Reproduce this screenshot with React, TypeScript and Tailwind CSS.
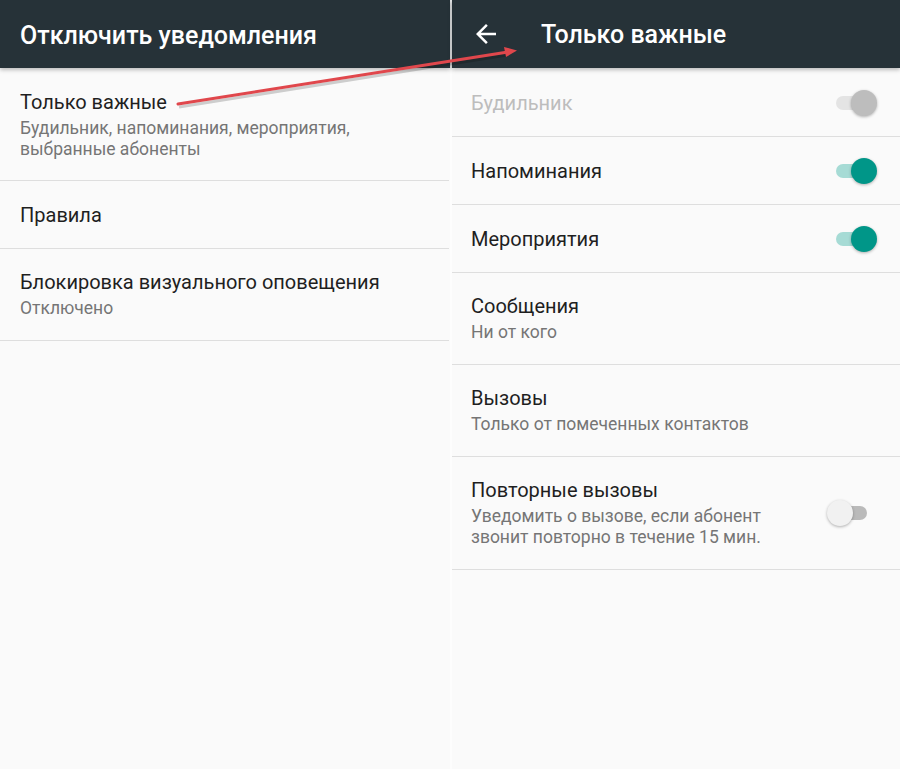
import React from "react";

function BackArrow() {
  return (
    <svg width="30" height="30" viewBox="0 0 24 24" fill="#ffffff">
      <path d="M20 11H7.83l5.59-5.59L12 4l-8 8 8 8 1.41-1.41L7.83 13H20v-2z" />
    </svg>
  );
}

type ToggleProps = { state: "on" | "off" | "disabled" };

function Toggle({ state }: ToggleProps) {
  const track =
    state === "on" ? "bg-[#a6dbd5]" : state === "disabled" ? "bg-[#e4e4e4]" : "bg-[#bababa]";
  const thumb =
    state === "on"
      ? "bg-[#009688] right-0"
      : state === "disabled"
      ? "bg-[#bdbdbd] right-0"
      : "bg-[#f1f1f1] left-0";
  return (
    <div className={`relative w-[46px] h-[26px] shrink-0 ${state === "off" ? "mr-[4px]" : ""}`}>
      <div className={`absolute left-[5px] right-[6px] top-[6px] h-[14px] rounded-full ${track}`} />
      <div
        className={`absolute top-0 w-[26px] h-[26px] rounded-full shadow-[0_1px_3px_rgba(0,0,0,0.3)] ${thumb}`}
      />
    </div>
  );
}

type RowProps = {
  title: string;
  subs?: string[];
  h: string;
  toggle?: ToggleProps["state"];
  disabled?: boolean;
  pl: string;
};

function Row({ title, subs, h, toggle, disabled, pl }: RowProps) {
  return (
    <div className={`flex items-center border-b border-[#dedede] ${h} ${pl} pr-[23px]`}>
      <div className="flex-1 flex flex-col">
        <div
          className={`text-[20px] leading-[24px] ${disabled ? "text-[#bdbdbd]" : "text-[#1f1f1f]"}`}
        >
          {title}
        </div>
        {subs && (
          <div className="mt-[4px] text-[17.5px] leading-[21px] text-[#757575]">
            {subs.map((s) => (
              <div key={s}>{s}</div>
            ))}
          </div>
        )}
      </div>
      {toggle && <Toggle state={toggle} />}
    </div>
  );
}

export default function App() {
  return (
    <div
      className="relative w-[900px] h-[769px] flex bg-[#fafafa] overflow-hidden"
      style={{ fontFamily: "Roboto, 'Noto Sans', sans-serif" }}
    >
      {/* Left panel */}
      <div className="w-[450px] flex flex-col">
        <div className="h-[68px] bg-[#263238] flex items-center pl-[20px] shadow-[0_2px_4px_rgba(0,0,0,0.25)] z-10">
          <div className="text-white text-[25px] font-medium leading-none pt-[2px]">
            Отключить уведомления
          </div>
        </div>
        <div className="flex flex-col pr-[1px] pt-[1px]">
          <Row
            pl="pl-[20px]"
            h="h-[112px]"
            title="Только важные"
            subs={["Будильник, напоминания, мероприятия,", "выбранные абоненты"]}
          />
          <Row pl="pl-[20px]" h="h-[68px]" title="Правила" />
          <Row
            pl="pl-[20px]"
            h="h-[92px]"
            title="Блокировка визуального оповещения"
            subs={["Отключено"]}
          />
        </div>
      </div>

      {/* Separator */}
      <div className="w-[2px] flex flex-col">
        <div className="h-[68px] bg-[#e9ebec]" />
        <div className="flex-1 bg-[#fdfdfd]" />
      </div>

      {/* Right panel */}
      <div className="flex-1 flex flex-col">
        <div className="h-[68px] bg-[#263238] flex items-center pl-[19px] shadow-[0_2px_4px_rgba(0,0,0,0.25)] z-10">
          <BackArrow />
          <div className="ml-[40px] text-white text-[25px] font-medium leading-none">
            Только важные
          </div>
        </div>
        <div className="flex flex-col pt-[1px]">
          <Row pl="pl-[19px]" h="h-[68px]" title="Будильник" toggle="disabled" disabled />
          <Row pl="pl-[19px]" h="h-[68px]" title="Напоминания" toggle="on" />
          <Row pl="pl-[19px]" h="h-[68px]" title="Мероприятия" toggle="on" />
          <Row pl="pl-[19px]" h="h-[92px]" title="Сообщения" subs={["Ни от кого"]} />
          <Row
            pl="pl-[19px]"
            h="h-[92px]"
            title="Вызовы"
            subs={["Только от помеченных контактов"]}
          />
          <Row
            pl="pl-[19px]"
            h="h-[113px]"
            title="Повторные вызовы"
            subs={["Уведомить о вызове, если абонент", "звонит повторно в течение 15 мин."]}
            toggle="off"
          />
        </div>
      </div>

      {/* Red annotation arrow */}
      <svg
        className="absolute left-0 top-0 pointer-events-none z-20"
        width="900"
        height="769"
        viewBox="0 0 900 769"
      >
        <line
          x1="178"
          y1="105"
          x2="506"
          y2="53"
          stroke="rgba(0,0,0,0.18)"
          strokeWidth="3"
          transform="translate(1,2)"
        />
        <line x1="178" y1="104" x2="508" y2="52" stroke="#e0474c" strokeWidth="3" strokeLinecap="round" />
        <polygon points="517,50.5 504,47 506,57" fill="#e0474c" />
      </svg>
    </div>
  );
}
